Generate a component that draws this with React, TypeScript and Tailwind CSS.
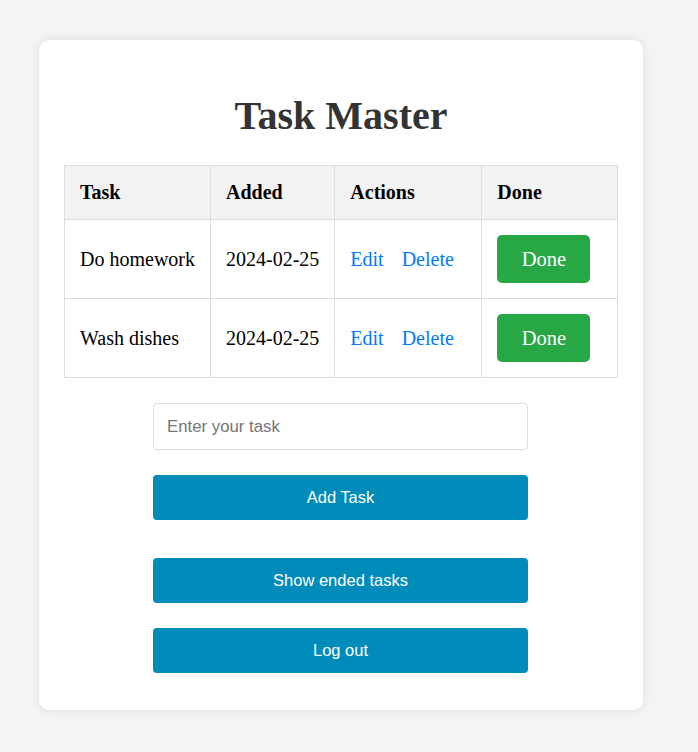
import React from "react";

const tasks = [
  { name: "Do homework", added: "2024-02-25" },
  { name: "Wash dishes", added: "2024-02-25" },
];

export default function App() {
  return (
    <div className="min-h-screen bg-[#f4f4f4] pt-[40px] pb-[42px]">
      <div className="ml-[39px] w-[604px] rounded-[10px] bg-white px-[25px] pt-[53px] pb-[37px] shadow-[0_0_10px_rgba(0,0,0,0.1)]">
        {/* Titulo */}
        <h1 className="mb-[26px] text-center font-['Liberation_Serif',serif] text-[40px] font-bold leading-[46px] text-[#333]">
          Task Master
        </h1>

        <table className="w-[554px] border-collapse whitespace-nowrap font-['Liberation_Serif',serif] text-[20px] leading-[23px] text-black">
          <thead>
            <tr className="bg-[#f2f2f2]">
              <th className="w-[146px] border border-[#ddd] p-[15px] text-left font-bold">Task</th>
              <th className="w-[124px] border border-[#ddd] p-[15px] text-left font-bold">Added</th>
              <th className="w-[147px] border border-[#ddd] p-[15px] text-left font-bold">Actions</th>
              <th className="border border-[#ddd] p-[15px] text-left font-bold">Done</th>
            </tr>
          </thead>
          <tbody>
            {tasks.map((t) => (
              <tr key={t.name}>
                <td className="border border-[#ddd] p-[15px]">{t.name}</td>
                <td className="border border-[#ddd] p-[15px]">{t.added}</td>
                <td className="border border-[#ddd] p-[15px]">
                  <span className="text-[#007bff]">Edit</span>
                  <span className="ml-[18px] text-[#007bff]">Delete</span>
                </td>
                <td className="border border-[#ddd] p-[15px]">
                  <button className="flex h-[48px] w-[93px] items-center justify-center rounded-[5px] bg-[#28a745] font-['Liberation_Serif',serif] text-[20.5px] text-white">
                    Done
                  </button>
                </td>
              </tr>
            ))}
          </tbody>
        </table>

        <div className="ml-[89px] mt-[25px] flex w-[375px] flex-col font-['Liberation_Sans',Arial,sans-serif] text-[16.5px]">
          <input
            type="text"
            placeholder="Enter your task"
            className="h-[47px] w-full rounded-[4px] border border-[#ddd] px-[13px] text-[16.8px] placeholder:text-[#757575] outline-none"
          />
          <button className="mt-[25px] h-[45px] w-full rounded-[4px] bg-[#008cba] text-white">Add Task</button>
          <button className="mt-[38px] h-[45px] w-full rounded-[4px] bg-[#008cba] text-white">Show ended tasks</button>
          <button className="mt-[25px] h-[45px] w-full rounded-[4px] bg-[#008cba] text-white">Log out</button>
        </div>
      </div>
    </div>
  );
}
